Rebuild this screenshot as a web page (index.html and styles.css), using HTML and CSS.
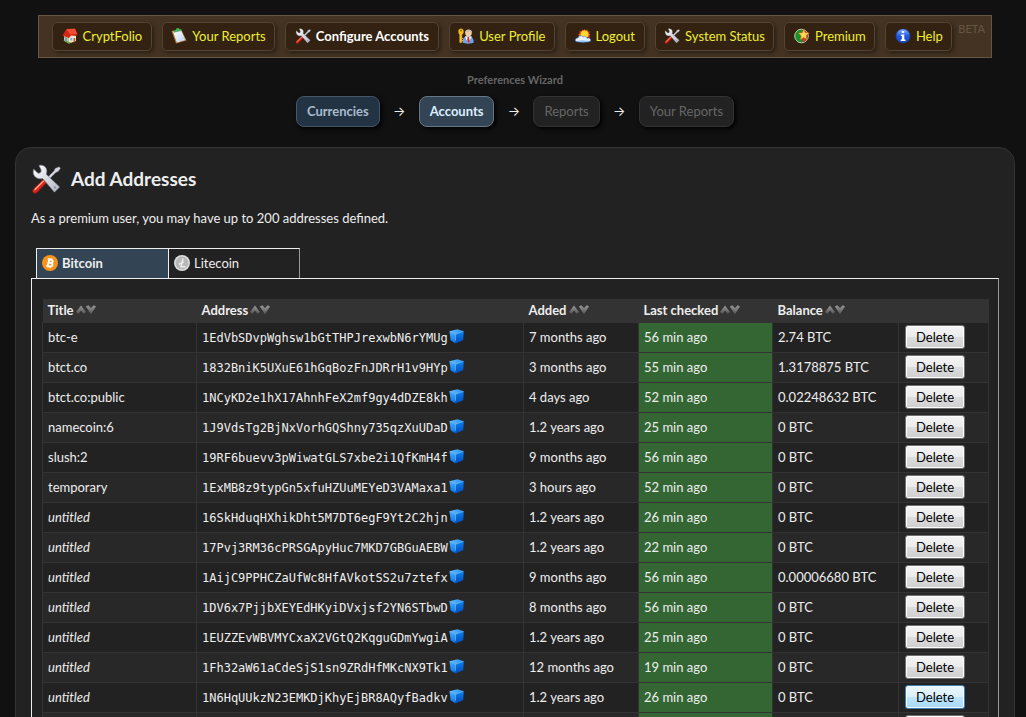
FILE: index.html
```
<!DOCTYPE html>
<html lang="en">
<head>
<meta charset="utf-8">
<title>Configure Accounts - CryptFolio</title>
<link rel="stylesheet" href="styles.css">
</head>
<body>
<svg class="sprite" aria-hidden="true">
  <defs>
    <linearGradient id="g-steel" x1="0" y1="0" x2="1" y2="1"><stop offset="0" stop-color="#fff"/><stop offset="1" stop-color="#b4b6c6"/></linearGradient>
    <linearGradient id="g-red" x1="0" y1="0" x2="1" y2="1"><stop offset="0" stop-color="#f87868"/><stop offset=".5" stop-color="#e02818"/><stop offset="1" stop-color="#a00800"/></linearGradient>
    <linearGradient id="g-board" x1="0" y1="0" x2="1" y2="1"><stop offset="0" stop-color="#fff"/><stop offset="1" stop-color="#b8d4f4"/></linearGradient>
    <linearGradient id="g-info" x1="0" y1="0" x2="0" y2="1"><stop offset="0" stop-color="#8ab4ff"/><stop offset=".5" stop-color="#2058e0"/><stop offset="1" stop-color="#1c48c8"/></linearGradient>
    <linearGradient id="g-cubetop" x1="0" y1="0" x2="1" y2="0"><stop offset="0" stop-color="#68bcff"/><stop offset="1" stop-color="#2090f8"/></linearGradient>
    <linearGradient id="g-cubeleft" x1="0" y1="0" x2="0" y2="1"><stop offset="0" stop-color="#48acff"/><stop offset="1" stop-color="#0078ec"/></linearGradient>
    <linearGradient id="g-cuberight" x1="0" y1="0" x2="0" y2="1"><stop offset="0" stop-color="#0c84f4"/><stop offset="1" stop-color="#0048b8"/></linearGradient>
    <linearGradient id="g-sort" x1="0" y1="0" x2="0" y2="1"><stop offset="0" stop-color="#999"/><stop offset="1" stop-color="#555"/></linearGradient>
  </defs>
  <symbol id="i-tools" viewBox="0 0 32 32">
    <path d="M30 3l1.500 1.500-2.500 3.500-2.500 1-8 8-1.800-1.800 8-8 1-2.500z" fill="#d8d8e4" stroke="#777" stroke-width=".5"/>
    <path d="M13.500 16l3.500 3.500L6.500 30.500c-1.300 1.200-3 1-4 .2-1.100-1.200-1-2.800.2-4z" fill="url(#g-red)" stroke="#8a1008" stroke-width=".6"/>
    <path d="M4 27.500l9.500-9.500" stroke="#ffb0a4" stroke-width="1.300"/>
    <path d="M8.500 1.500c4.500-1 8 1.500 8.300 5.500.1 1.500-.2 2.700-.6 3.800L30.500 24.500 25 30 12.500 15.500C8 16.500 3.500 14.500 2.500 10c-.3-1.800-.2-3.300.4-4.500l4.500 4.300c2.200.3 3.700-1.200 3.400-3.500z" fill="url(#g-steel)" stroke="#808294" stroke-width=".7"/>
    <circle cx="25.500" cy="25" r="1.200" fill="#8c8ea0"/>
  </symbol>
  <symbol id="i-home" viewBox="0 0 16 16">
    <path d="M2 7l4-4 8 3v7l-7 2.500-5-3z" fill="#f2e4cc"/>
    <path d="M2 7l5 2v6.500l-5-3z" fill="#d8b890"/>
    <path d="M4.500 1L13 .8 15.500 6.500 14 8 9 7.500 7 10 .5 7.500z" fill="#d82414"/>
    <path d="M4.500 1L13 .8l2.300 5.300L8 6.300z" fill="#f04c34"/>
    <path d="M3 9l2 .8v4.200l-2-1.200z" fill="#58a8c8"/>
    <path d="M8.500 10h1.700v2.500H8.500z" fill="#58b0e8"/>
    <path d="M11.500 10h1.700v4l-1.700.5z" fill="#a86830"/>
    <path d="M1 12l2 1.500 4 2 2-1.500-3-.3z" fill="#58a830"/>
  </symbol>
  <symbol id="i-board" viewBox="0 0 16 16">
    <path d="M.5 3L10 1 15.500 12.500 5 15.500z" fill="#b87830"/>
    <path d="M2 3.500L9.800 2l4.700 10L5.800 14.500z" fill="url(#g-board)"/>
    <path d="M10.500 13l1.300-2.500 2.500 1z" fill="#fff" stroke="#90a8c8" stroke-width=".4"/>
    <path d="M3 4.300l.3-2 1.700-.3C5-.3 8-.6 8.300 1.300l1.700-.2.300 1.500z" fill="#48b860" stroke="#18803c" stroke-width=".4"/>
  </symbol>
  <symbol id="i-user" viewBox="0 0 16 16">
    <path d="M4.500 14.500C4.500 9.500 7 8 10 8s5.700 1.500 5.700 6.500c-2.500 1.500-8.500 1.500-11.200 0z" fill="#6ca4f4"/>
    <path d="M7 8.500l3 6.500L14 8.500z" fill="#fff"/>
    <path d="M9.500 9h1.600l.6 4.500-1.300 1.500-1.200-1.500z" fill="#d82818"/>
    <circle cx="10.500" cy="5" r="3.300" fill="#f0cca4"/>
    <path d="M7 5c0-4.500 6.800-4.500 7.200-.5C12 3 9.500 3.500 7 5z" fill="#c8bcac"/>
    <path d="M.5 2.500C1 .3 5 .3 5.500 2.500S5 6 4 6.500V14l-1.500 1.200L1.500 14V6.500C.5 5.500.2 4 .5 2.500z" fill="#f8c020" stroke="#b87800" stroke-width=".5"/>
    <circle cx="3" cy="2.700" r=".8" fill="#6c4400"/><path d="M4 10h1.200v1H4zM4 12h1v1H4z" fill="#f8bc18"/>
  </symbol>
  <symbol id="i-sun" viewBox="0 0 16 16">
    <path d="M9.500 1l1 1.500 2-1 .2 1.900 2 .2-.8 1.800 1.600 1.100-1.400 1.400 1 1.600H4l.2-1.800-1-1.500 1.600-1-.2-2 1.900.1.800-1.700 1.300.9z" fill="#f05810"/>
    <circle cx="9.600" cy="6.300" r="3.800" fill="#ffd830"/>
    <path d="M.5 13c-.5-2 1-3.300 2.500-3C3.500 7.500 7 7 8 9c2-1.300 4 0 4 1.300 2.500-.8 4 .7 3.500 2.700-2 1.500-13 1.500-15 0z" fill="#e8f2ff" stroke="#4c8ce0" stroke-width=".7"/>
    <path d="M1.500 13c3 .9 10 .9 13 0-2-.7-5 0-7-.8-2 .8-4 .1-6 .8z" fill="#90bcf4"/>
  </symbol>
  <symbol id="i-star" viewBox="0 0 16 16">
    <circle cx="7.500" cy="8" r="6.800" fill="#149428" stroke="#c8c8b8" stroke-width="1"/>
    <path d="M9 1.700c6.500 1 6.500 11.500 0 12.600-1-3-1-9 0-12.600z" fill="#c83c28"/>
    <path d="M9.700 1l1.500 3.700 4 .2-3.200 2.800 1.200 4-3.500-2.100-3.500 2.300 1-4.100-3-2.700 4-.4z" fill="#ffd858" stroke="#c06018" stroke-width=".6"/>
  </symbol>
  <symbol id="i-info" viewBox="0 0 16 16">
    <circle cx="8" cy="8" r="7" fill="url(#g-info)" stroke="#1840b0" stroke-width=".6"/>
    <path d="M6.800 3h2.400v2.100H6.800zM5.900 6.500h3.400v5h1.200V13H5.700v-1.500h1.200V8h-1z" fill="#fff"/>
  </symbol>
  <symbol id="i-btc" viewBox="0 0 16 16">
    <circle cx="8" cy="8" r="8" fill="#f7931a"/>
    <g transform="rotate(13 8 8)" fill="none" stroke="#fff" stroke-width="1.800">
      <path d="M5 4.700h3.600c2.300 0 2.300 3.100 0 3.100H6.300m2.300 0c3 0 3 3.500 0 3.500H5M6.400 4.700v6.600"/>
      <path d="M7 3v1.700M9 3v1.700M7 11.300V13M9 11.300V13" stroke-width="1"/>
    </g>
  </symbol>
  <symbol id="i-ltc" viewBox="0 0 16 16">
    <circle cx="8" cy="8" r="8" fill="#dcdcdc"/>
    <circle cx="8" cy="8" r="6" fill="#b8b8b8" stroke="#aaa" stroke-width=".6"/>
    <path d="M9 3.500L7 11.800h4.500M4.800 9.300l5-2.500" stroke="#ececec" stroke-width="1.500" fill="none"/>
  </symbol>
  <symbol id="i-cube" viewBox="0 0 16 16">
    <path d="M.5 2.500L9 .3l6.700 2L7 5.500z" fill="url(#g-cubetop)"/>
    <path d="M.5 2.500L7 5.500v10L1.800 12z" fill="url(#g-cubeleft)"/>
    <path d="M7 5.500l8.700-3.200-.6 9.700L7 15.500z" fill="url(#g-cuberight)"/>
    <path d="M.7 2.600L7 5.500l8.300-3M7 5.500v7" stroke="#84caff" stroke-width=".7" fill="none"/>
  </symbol>
  <symbol id="i-sort" viewBox="0 0 20 10">
    <path d="M0 7L5 .5 10 7 7.500 8.800 5 5.500 2.500 8.800z" fill="url(#g-sort)"/>
    <path d="M9.800 1.500L12.300.2 15 3l2.700-2.800 2.300 1.300L15 9.200z" fill="url(#g-sort)"/>
  </symbol>
</svg>

<nav class="nav" aria-label="Main">
  <ul class="nav-list">
    <li><a href="#"><svg class="icon"><use href="#i-home"/></svg>CryptFolio</a></li>
    <li><a href="#"><svg class="icon"><use href="#i-board"/></svg>Your Reports</a></li>
    <li><a href="#" class="current"><svg class="icon"><use href="#i-tools"/></svg>Configure Accounts</a></li>
    <li><a href="#"><svg class="icon"><use href="#i-user"/></svg>User Profile</a></li>
    <li><a href="#"><svg class="icon"><use href="#i-sun"/></svg>Logout</a></li>
    <li><a href="#"><svg class="icon"><use href="#i-tools"/></svg>System Status</a></li>
    <li><a href="#"><svg class="icon"><use href="#i-star"/></svg>Premium</a></li>
    <li><a href="#"><svg class="icon"><use href="#i-info"/></svg>Help</a></li>
  </ul>
  <span class="beta">BETA</span>
</nav>

<section class="wizard">
  <h2>Preferences Wizard</h2>
  <div class="steps">
    <a href="#" class="step past">Currencies</a>
    <span class="arrow">→</span>
    <a href="#" class="step active">Accounts</a>
    <span class="arrow">→</span>
    <span class="step">Reports</span>
    <span class="arrow">→</span>
    <span class="step">Your Reports</span>
  </div>
</section>

<main class="page">
  <h1><svg class="icon-large"><use href="#i-tools"/></svg>Add Addresses</h1>
  <p>As a premium user, you may have up to 200 addresses defined.</p>
  <div class="tabs" role="tablist">
    <button class="tab selected" role="tab" aria-selected="true"><svg class="icon"><use href="#i-btc"/></svg>Bitcoin</button>
    <button class="tab" role="tab" aria-selected="false"><svg class="icon"><use href="#i-ltc"/></svg>Litecoin</button>
  </div>
  <div class="panel">
    <table class="addresses">
      <colgroup><col class="c-title"><col class="c-address"><col class="c-added"><col class="c-checked"><col class="c-balance"><col class="c-action"></colgroup>
      <thead>
        <tr>
          <th>Title <svg class="sort"><use href="#i-sort"/></svg></th>
          <th>Address <svg class="sort"><use href="#i-sort"/></svg></th>
          <th>Added <svg class="sort"><use href="#i-sort"/></svg></th>
          <th>Last checked <svg class="sort"><use href="#i-sort"/></svg></th>
          <th>Balance <svg class="sort"><use href="#i-sort"/></svg></th>
          <th></th>
        </tr>
      </thead>
      <tbody>
        <tr><td>btc-e</td><td><code>1EdVbSDvpWghsw1bGtTHPJrexwbN6rYMUg</code><svg class="cube"><use href="#i-cube"/></svg></td><td>7 months ago</td><td class="ok">56 min ago</td><td>2.74 BTC</td><td><button class="delete">Delete</button></td></tr>
        <tr><td>btct.co</td><td><code>1832BniK5UXuE61hGqBozFnJDRrH1v9HYp</code><svg class="cube"><use href="#i-cube"/></svg></td><td>3 months ago</td><td class="ok">55 min ago</td><td>1.3178875 BTC</td><td><button class="delete">Delete</button></td></tr>
        <tr><td>btct.co:public</td><td><code>1NCyKD2e1hX17AhnhFeX2mf9gy4dDZE8kh</code><svg class="cube"><use href="#i-cube"/></svg></td><td>4 days ago</td><td class="ok">52 min ago</td><td>0.02248632 BTC</td><td><button class="delete">Delete</button></td></tr>
        <tr><td>namecoin:6</td><td><code>1J9VdsTg2BjNxVorhGQShny735qzXuUDaD</code><svg class="cube"><use href="#i-cube"/></svg></td><td>1.2 years ago</td><td class="ok">25 min ago</td><td>0 BTC</td><td><button class="delete">Delete</button></td></tr>
        <tr><td>slush:2</td><td><code>19RF6buevv3pWiwatGLS7xbe2i1QfKmH4f</code><svg class="cube"><use href="#i-cube"/></svg></td><td>9 months ago</td><td class="ok">56 min ago</td><td>0 BTC</td><td><button class="delete">Delete</button></td></tr>
        <tr><td>temporary</td><td><code>1ExMB8z9typGn5xfuHZUuMEYeD3VAMaxa1</code><svg class="cube"><use href="#i-cube"/></svg></td><td>3 hours ago</td><td class="ok">52 min ago</td><td>0 BTC</td><td><button class="delete">Delete</button></td></tr>
        <tr><td><em>untitled</em></td><td><code>16SkHduqHXhikDht5M7DT6egF9Yt2C2hjn</code><svg class="cube"><use href="#i-cube"/></svg></td><td>1.2 years ago</td><td class="ok">26 min ago</td><td>0 BTC</td><td><button class="delete">Delete</button></td></tr>
        <tr><td><em>untitled</em></td><td><code>17Pvj3RM36cPRSGApyHuc7MKD7GBGuAEBW</code><svg class="cube"><use href="#i-cube"/></svg></td><td>1.2 years ago</td><td class="ok">22 min ago</td><td>0 BTC</td><td><button class="delete">Delete</button></td></tr>
        <tr><td><em>untitled</em></td><td><code>1AijC9PPHCZaUfWc8HfAVkotSS2u7ztefx</code><svg class="cube"><use href="#i-cube"/></svg></td><td>9 months ago</td><td class="ok">56 min ago</td><td>0.00006680 BTC</td><td><button class="delete">Delete</button></td></tr>
        <tr><td><em>untitled</em></td><td><code>1DV6x7PjjbXEYEdHKyiDVxjsf2YN6STbwD</code><svg class="cube"><use href="#i-cube"/></svg></td><td>8 months ago</td><td class="ok">56 min ago</td><td>0 BTC</td><td><button class="delete">Delete</button></td></tr>
        <tr><td><em>untitled</em></td><td><code>1EUZZEvWBVMYCxaX2VGtQ2KqguGDmYwgiA</code><svg class="cube"><use href="#i-cube"/></svg></td><td>1.2 years ago</td><td class="ok">25 min ago</td><td>0 BTC</td><td><button class="delete">Delete</button></td></tr>
        <tr><td><em>untitled</em></td><td><code>1Fh32aW61aCdeSjS1sn9ZRdHfMKcNX9Tk1</code><svg class="cube"><use href="#i-cube"/></svg></td><td>12 months ago</td><td class="ok">19 min ago</td><td>0 BTC</td><td><button class="delete">Delete</button></td></tr>
        <tr><td><em>untitled</em></td><td><code>1N6HqUUkzN23EMKDjKhyEjBR8AQyfBadkv</code><svg class="cube"><use href="#i-cube"/></svg></td><td>1.2 years ago</td><td class="ok">26 min ago</td><td>0 BTC</td><td><button class="delete hot">Delete</button></td></tr>
        <tr><td></td><td></td><td></td><td class="ok"></td><td></td><td><button class="delete" aria-label="Delete"></button></td></tr>
      </tbody>
    </table>
  </div>
</main>
</body>
</html>
```
FILE: styles.css
```
* { box-sizing: border-box; }

body {
  margin: 0;
  padding: 15px 11px 0 15px;
  height: 100vh;
  overflow: hidden;
  background: #111;
  color: #eee;
  font: 13px/20px Lato, "Open Sans", sans-serif;
}

a { text-decoration: none; }
.sprite { position: absolute; width: 0; height: 0; }
.icon { width: 16px; height: 16px; flex: none; }

.nav {
  display: flex;
  margin: 0 23px;
  padding: 6px 6px 6px 13px;
  gap: 6px;
  border: 1px solid #654;
  background: #432;
}
.nav-list {
  display: flex;
  flex: 1;
  gap: 10px;
  margin: 0;
  padding: 0;
  list-style: none;
}
.nav-list li { flex: 1 1 auto; }
.nav-list a {
  display: flex;
  align-items: center;
  justify-content: center;
  gap: 5px;
  height: 29px;
  padding-bottom: 2px;
  border: 1px solid #543;
  border-radius: 5px;
  background: #321;
  box-shadow: 2px 2px 4px rgba(0, 0, 0, .4);
  color: #ee3;
  white-space: nowrap;
}
.nav-list .current { color: #fff; font-weight: bold; }
.beta { color: #654; font-size: 11px; line-height: 14px; }

.wizard { padding: 12px 0 20px; }
.wizard h2 {
  margin: 0 0 6px;
  color: #666;
  font-size: 11px;
  line-height: 20px;
  text-align: center;
}
.steps { display: flex; justify-content: center; }
.step {
  padding: 5px 10px;
  height: 31px;
  line-height: 19px;
  border: 1px solid #333;
  border-radius: 8px;
  background: #222;
  box-shadow: 2px 2px 4px #000;
  color: #666;
}
.step.past { border-color: #456; background: #234; color: #abc; font-weight: bold; }
.step.active { border-color: #678; background: #345; color: #def; font-weight: bold; }
.arrow { width: 39px; text-align: center; line-height: 31px; font-family: Inter, sans-serif; }

.page {
  padding: 16px 15px;
  border: 1px solid #333;
  border-radius: 16px;
  background: #222;
}
.page h1 {
  display: flex;
  align-items: center;
  gap: 10px;
  margin: 0 0 14px;
  font-size: 19px;
  line-height: 30px;
}
.icon-large { width: 30px; height: 30px; }
.page p { margin: 0; }

.tabs { display: flex; margin: 20px 5px 0; }
.tab {
  display: flex;
  align-items: center;
  gap: 4px;
  width: 132px;
  height: 30px;
  padding: 0 5px 1px;
  border: 1px solid #eee;
  border-width: 1px 0 0 1px;
  background: #222;
  color: #eee;
  font: inherit;
}
.tab:last-child { border-right: 1px solid #999; }
.tab.selected { background: #345; font-weight: bold; }

.panel { padding: 20px 10px; border: 1px solid #eee; border-right-color: #999; }

.addresses { width: 100%; table-layout: fixed; border-collapse: collapse; }
.c-title { width: 154px; }
.c-address { width: 327px; }
.c-added { width: 115px; }
.c-checked { width: 134px; }
.c-balance { width: 126px; }
.c-action { width: 90px; }
.addresses th {
  height: 23px;
  padding: 0 5px;
  background: #333;
  text-align: left;
  line-height: 22px;
}
.sort { width: 20px; height: 10px; margin-left: -1px; }
.addresses td {
  height: 30px;
  padding: 0 5px;
  border: 1px solid #333;
  line-height: 20px;
  white-space: nowrap;
}
.addresses tbody tr:nth-child(even) { background: #282828; }
.addresses .ok { background: #363; }
.addresses code { font: 12px "DejaVu Sans Mono", monospace; }
.cube { width: 15px; height: 15px; margin-left: 1px; vertical-align: -2px; }

.delete {
  display: block;
  width: 60px;
  height: 24px;
  margin-left: 1px;
  padding: 0;
  border: 1px solid #707070;
  border-radius: 3px;
  background: linear-gradient(#f4f4f4 0 , #ebebeb 50%, #ddd 50%, #cfcfcf);
  box-shadow: inset 0 0 0 1px #fcfcfc;
  color: #000;
  font: inherit;
}
.delete.hot {
  border-color: #3c7fb1;
  background: linear-gradient(#eaf6fd, #d9f0fc 50%, #bee6fd 50%, #a7d9f5);
  box-shadow: inset 0 0 0 1px #f0faff;
}
```
